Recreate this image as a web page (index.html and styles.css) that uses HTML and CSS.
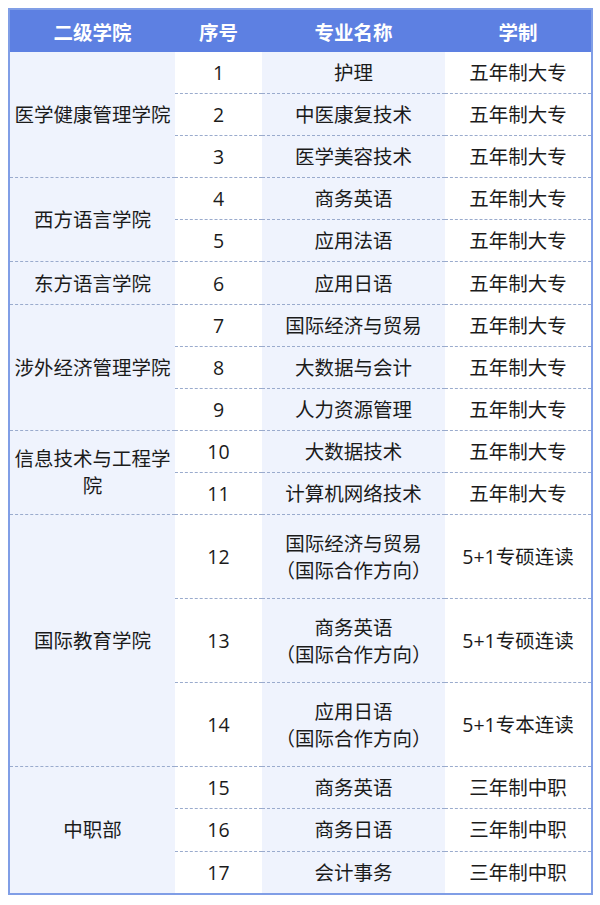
FILE: index.html
```html
<!DOCTYPE html>
<html lang="zh-CN">
<head>
<meta charset="utf-8">
<link rel="stylesheet" href="styles.css">
</head>
<body>
<table class="majors">
  <colgroup>
    <col class="c-school">
    <col class="c-no">
    <col class="c-major">
    <col class="c-len">
  </colgroup>
  <thead>
    <tr><th>二级学院</th><th>序号</th><th>专业名称</th><th>学制</th></tr>
  </thead>
  <tbody>
    <tr class="grp"><td class="school" rowspan="3">医学健康管理学院</td><td class="no">1</td><td class="major">护理</td><td class="len">五年制大专</td></tr>
    <tr><td class="no">2</td><td class="major">中医康复技术</td><td class="len">五年制大专</td></tr>
    <tr><td class="no">3</td><td class="major">医学美容技术</td><td class="len">五年制大专</td></tr>

    <tr class="grp"><td class="school" rowspan="2">西方语言学院</td><td class="no">4</td><td class="major">商务英语</td><td class="len">五年制大专</td></tr>
    <tr><td class="no">5</td><td class="major">应用法语</td><td class="len">五年制大专</td></tr>

    <tr class="grp"><td class="school">东方语言学院</td><td class="no">6</td><td class="major">应用日语</td><td class="len">五年制大专</td></tr>

    <tr class="grp"><td class="school" rowspan="3">涉外经济管理学院</td><td class="no">7</td><td class="major">国际经济与贸易</td><td class="len">五年制大专</td></tr>
    <tr><td class="no">8</td><td class="major">大数据与会计</td><td class="len">五年制大专</td></tr>
    <tr><td class="no">9</td><td class="major">人力资源管理</td><td class="len">五年制大专</td></tr>

    <tr class="grp"><td class="school" rowspan="2">信息技术与工程学院</td><td class="no">10</td><td class="major">大数据技术</td><td class="len">五年制大专</td></tr>
    <tr><td class="no">11</td><td class="major">计算机网络技术</td><td class="len">五年制大专</td></tr>

    <tr class="grp tall"><td class="school" rowspan="3">国际教育学院</td><td class="no">12</td><td class="major">国际经济与贸易<br>（国际合作方向）</td><td class="len">5+1专硕连读</td></tr>
    <tr class="tall"><td class="no">13</td><td class="major">商务英语<br>（国际合作方向）</td><td class="len">5+1专硕连读</td></tr>
    <tr class="tall"><td class="no">14</td><td class="major">应用日语<br>（国际合作方向）</td><td class="len">5+1专本连读</td></tr>

    <tr class="grp"><td class="school" rowspan="3">中职部</td><td class="no">15</td><td class="major">商务英语</td><td class="len">三年制中职</td></tr>
    <tr><td class="no">16</td><td class="major">商务日语</td><td class="len">三年制中职</td></tr>
    <tr><td class="no">17</td><td class="major">会计事务</td><td class="len">三年制中职</td></tr>
  </tbody>
</table>
</body>
</html>
```
FILE: styles.css
```css
html, body {
  margin: 0;
  padding: 0;
  background: #ffffff;
}
body {
  padding: 8px 0 0 8px;
  font-family: "Open Sans", "Noto Sans CJK SC", sans-serif;
  color: #1b1b1b;
}
.majors {
  width: 583px;
  table-layout: fixed;
  border-collapse: collapse;
  border: 2px solid #809ee6;
  font-size: 19.5px;
}
.c-school { width: 166px; }
.c-no { width: 87px; }
.c-major { width: 183px; }
.c-len { width: 147px; }

.majors th {
  height: 42px;
  padding: 0;
  background: #5d80e2;
  color: #ffffff;
  font-weight: bold;
  font-size: 19.5px;
  text-align: center;
  vertical-align: middle;
}
.majors td {
  height: 41.1px;
  padding: 0 4px;
  text-align: center;
  vertical-align: middle;
  line-height: 27px;
  border-top: 1px dashed #9aabcd;
}
.majors tr.tall td { height: 83.1px; }
.majors tr.tall td.school { height: auto; }
.majors td.school,
.majors td.major {
  background: #eff3fd;
}
.majors td.no,
.majors td.len {
  background: #ffffff;
}
.majors tbody tr:first-child td { border-top: none; }
```
